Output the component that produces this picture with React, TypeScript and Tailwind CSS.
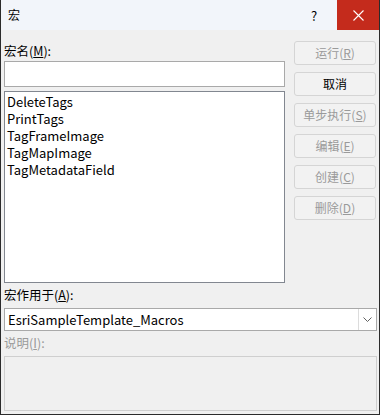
import React from "react";

const F = { fontFamily: '"Noto Sans CJK SC", "Noto Sans", sans-serif' };

function Btn({ children, enabled }: { children: React.ReactNode; enabled?: boolean }) {
  return (
    <div
      className={
        "h-[24px] w-[82px] rounded-[3px] border border-[#d5d5d5] bg-[#f2f2f2] flex items-center justify-center text-[12px] " +
        (enabled ? "text-black border-[#c8c8c8]" : "text-[#9a9a9a]")
      }
    >
      {children}
    </div>
  );
}

export default function App() {
  const items = ["DeleteTags", "PrintTags", "TagFrameImage", "TagMapImage", "TagMetadataField"];
  return (
    <div style={F} className="w-[380px] h-[415px] bg-[#f0f0f0] border-x border-b border-[#2b2b2b] flex flex-col text-[12px] text-black leading-none">
      <div className="h-[30px] bg-[#f2f5fa] flex items-center shrink-0">
        <span className="pl-[7px] text-[12px]">宏</span>
        <div className="flex-1" />
        <span className="w-[40px] text-center text-[13px] mr-[3px]">?</span>
        <div className="w-[42px] h-full bg-[#c42b1c] flex items-center justify-center">
          <svg width="11" height="11" viewBox="0 0 11 11">
            <path d="M0.5 0.5 L10.5 10.5 M10.5 0.5 L0.5 10.5" stroke="#ffffff" strokeWidth="1.1" />
          </svg>
        </div>
      </div>
      <div className="flex pl-[3px] pr-[2px] pt-[11px]">
        <div className="w-[281px] flex flex-col">
          <div className="h-[20px] flex items-center text-[12.5px]">
            宏名(<span className="underline">M</span>):
          </div>
          <div className="h-[26px] border border-[#a9a9a9] bg-white" />
          <div className="h-[192px] border border-[#828790] bg-white mt-[4px] pl-[2px] pt-[1px] flex flex-col">
            {items.map((t) => (
              <div key={t} className="h-[17px] leading-[17px] text-[13px]">
                {t}
              </div>
            ))}
          </div>
        </div>
        <div className="ml-[9px] flex flex-col gap-[7px]">
          <Btn>运行(<span className="underline">R</span>)</Btn>
          <Btn enabled>取消</Btn>
          <Btn>单步执行(<span className="underline">S</span>)</Btn>
          <Btn>编辑(<span className="underline">E</span>)</Btn>
          <Btn>创建(<span className="underline">C</span>)</Btn>
          <Btn>删除(<span className="underline">D</span>)</Btn>
        </div>
      </div>
      <div className="flex flex-col pl-[3px] pr-[2px]">
        <div className="h-[25px] flex items-center text-[12.5px]">
          宏作用于(<span className="underline">A</span>):
        </div>
        <div className="h-[23px] border border-[#a9a9a9] bg-white flex items-center">
          <span className="pl-[3px] text-[13px] flex-1">EsriSampleTemplate_Macros</span>
          <div className="w-[18px] h-[21px] border-l border-[#dcdcdc] flex items-center justify-center">
            <svg width="9" height="5" viewBox="0 0 9 5">
              <path d="M0.5 0.5 L4.5 4.5 L8.5 0.5" stroke="#606060" strokeWidth="1" fill="none" />
            </svg>
          </div>
        </div>
        <div className="h-[25px] flex items-center text-[#9a9a9a] text-[12.5px]">
          说明(<span className="underline">I</span>):
        </div>
        <div className="h-[55px] border border-[#cfcfcf] bg-[#f0f0f0]" />
      </div>
    </div>
  );
}
